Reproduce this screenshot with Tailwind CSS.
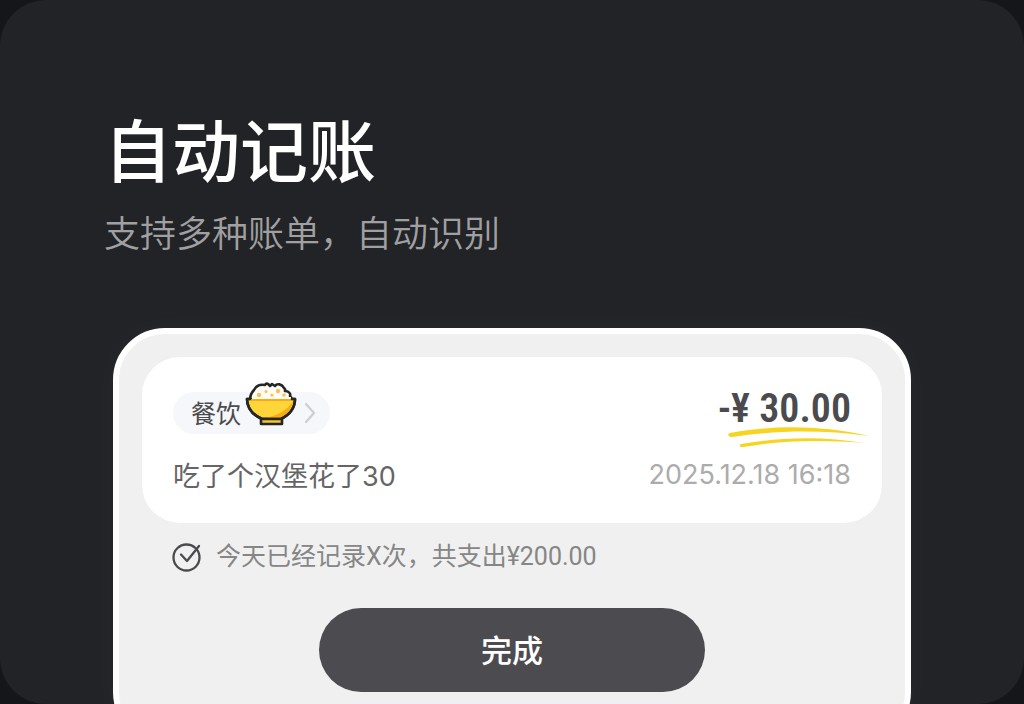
<!DOCTYPE html>
<html lang="zh-CN">
<head>
    <meta charset="UTF-8">
    <meta name="viewport" content="width=device-width, initial-scale=1.0">
    <script src="https://cdn.jsdelivr.net/npm/@tailwindcss/browser@4"></script>
    <title>自动记账</title>
</head>
<body class="bg-[#15161a] font-['Liberation_Sans','Noto_Sans_CJK_SC',sans-serif]">
    <main class="h-screen overflow-hidden rounded-[46px] bg-[#222326] px-[113px] pt-[113px]">
        <!-- 标题 -->
        <header class="-mx-[9px]">
            <h1 class="text-[68px] leading-[80px] font-medium text-white">自动记账</h1>
            <p class="mt-4 text-[36px] leading-[52px] font-[350] text-[#a0a0a2]">支持多种账单，自动识别</p>
        </header>

        <!-- 账单面板 -->
        <section class="mt-[67px] rounded-[52px] border-6 border-white bg-[#f0f0f0] px-[23px] pt-[23px] pb-[46px] shadow-[0_0_32px_rgba(255,255,255,0.03)]">
            <div class="flex h-[166px] justify-between rounded-[38px] bg-white px-[31px] pt-[35px]">
                <div class="flex flex-col items-start">
                    <button class="flex h-[42px] items-center rounded-full bg-[#f6f7fa] pr-[15px] pl-[18px] text-[25px] text-[#4b4b4d]">
                        <span class="pt-1">餐饮</span>
                        <svg class="-mt-[18px] ml-1 h-[46px] w-[52px]" viewBox="0 0 52 46" fill="none" stroke="#242628" stroke-width="2.600" stroke-linejoin="round" stroke-linecap="round">
                            <path fill="#fffcf2" d="M5 19c0-5 2-8 4-10 2-4 6-6 11-5 1-2 3-2 5 1l2-2 3 2c2-3 7-2 9 2 1 1 2 2 1 3 4 0 6 3 5 5 1 1 2 2 2 4z" />
                            <path fill="#ffd639" d="M2 18h48c0 9-6 16-14 20H17C8 34 2 27 2 18z" />
                            <path fill="#f9ab13" stroke="none" d="M48 20c-1 8-6 13-13 17H20c12-2 23-8 28-17z" />
                            <path stroke="#fffcf2" stroke-width="2" stroke-linecap="butt" d="M7 17h39" />
                            <path stroke="#f9ab13" stroke-width="2" d="M4 19h44" />
                            <path d="M5 18H2c0 9 6 16 15 20h19c8-4 14-11 14-20h-3" />
                            <path fill="#f5c928" d="M16 38h21v5H16z" />
                            <g fill="#fbbd68" stroke="none">
                                <circle cx="14" cy="14" r="2.200" />
                                <circle cx="21" cy="10.500" r="1.500" />
                                <circle cx="27" cy="14" r="1.600" />
                                <circle cx="33" cy="10" r="2.200" />
                                <circle cx="39" cy="14" r="1.800" />
                            </g>
                        </svg>
                        <svg class="ml-2 h-5 w-[10px]" viewBox="0 0 10 20" fill="none" stroke="#cdced0" stroke-width="2.200" stroke-linecap="round">
                            <path d="M1 1l8 9-8 9" />
                        </svg>
                    </button>
                    <p class="mt-[23px] text-[27px] leading-[40px] text-[#656565]">吃了个汉堡花了<span class="font-['Inter',sans-serif]">30</span></p>
                </div>
                <div class="relative flex flex-col items-end">
                    <p class="font-['Roboto_Condensed','Roboto',sans-serif] text-[40px] leading-[34px] font-semibold text-[#4b4b4f]">-¥ 30.00</p>
                    <!-- 手绘下划线 -->
                    <svg class="absolute top-[34px] -right-[18px] h-[22px] w-[142px]" viewBox="0 0 142 22" fill="#f5d51e">
                        <path d="M3 7C48-1 92-1 142 10C96 4 52 4 5 11c-4 0-5-3-2-4z" />
                        <path d="M14 18c40-7 82-8 123-1C95 14 56 14 16 21c-3 1-4-2-2-3z" />
                    </svg>
                    <time class="mt-[29px] font-['Inter',sans-serif] text-[27px] leading-[40px] text-[#acacac]">2025.12.18 16:18</time>
                </div>
            </div>

            <p class="mt-[14px] flex items-center gap-[14px] pl-[30px] font-['Roboto','Noto_Sans_CJK_SC',sans-serif] text-[25px] leading-[40px] text-[#868686]">
                <svg class="h-[30px] w-[30px]" viewBox="0 0 30 30" fill="none" stroke="#4b4b4f" stroke-width="2.300" stroke-linecap="round" stroke-linejoin="round">
                    <circle cx="14.500" cy="15.500" r="13" />
                    <path d="M9 12.500l6 6.500L27 4" />
                </svg>
                <span>今天已经记录X次，共支出¥200.00</span>
            </p>

            <button class="mx-auto mt-[31px] block h-[84px] w-[386px] rounded-full bg-[#4c4b4f] pt-1 text-[31px] font-medium text-white">完成</button>
        </section>
    </main>
</body>
</html>
